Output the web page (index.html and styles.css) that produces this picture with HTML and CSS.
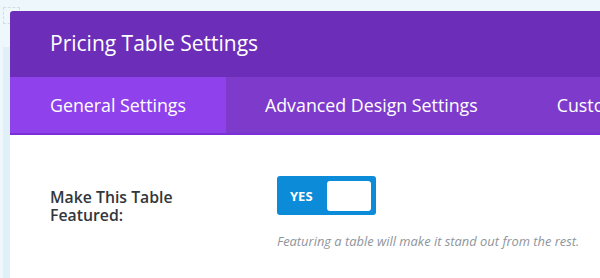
FILE: index.html
```html
<!DOCTYPE html>
<html lang="en">
<head>
    <meta charset="UTF-8">
    <title>Pricing Table Settings</title>
    <link rel="stylesheet" href="styles.css">
</head>
<body>
    <div class="backdrop">
        <div class="ghost-box"></div>
        <div class="ghost-strip"></div>
    </div>

    <div class="modal">
        <div class="modal-header">
            <h1>Pricing Table Settings</h1>
        </div>

        <!-- Tabs -->
        <div class="tabs">
            <div class="tab active">General Settings</div>
            <div class="tab">Advanced Design Settings</div>
            <div class="tab">Custom CSS</div>
        </div>

        <div class="modal-body">
            <div class="field-row">
                <div class="field-label">
                    <label>Make This Table Featured:</label>
                </div>
                <div class="field-control">
                    <div class="toggle">
                        <span class="toggle-text">YES</span>
                        <span class="toggle-knob"></span>
                    </div>
                    <p class="description">Featuring a table will make it stand out from the rest.</p>
                </div>
            </div>
        </div>
    </div>
</body>
</html>
```

FILE: styles.css
```css
/* Fondo general */
html {
    overflow: hidden;
}

body {
    margin: 0;
    background-color: #eef7fb;
    font-family: 'Open Sans', 'Noto Sans', sans-serif;
    overflow: hidden;
    height: 278px;
    position: relative;
}

.ghost-box {
    position: absolute;
    left: 3px;
    top: 7px;
    width: 15px;
    height: 15px;
    border: 1px dashed #d3dde2;
}

.ghost-strip {
    position: absolute;
    left: 3px;
    top: 47px;
    width: 7px;
    height: 231px;
    background-color: #e0f0f8;
}

/* Ventana */
.modal {
    position: absolute;
    left: 10px;
    top: 11px;
    right: 0;
    bottom: 0;
    background-color: #fff;
    border-radius: 3px 0 0 0;
    overflow: hidden;
}

.modal-header {
    background-color: #6c2eb9;
    height: 66px;
    padding: 0 40px;
    display: flex;
    align-items: center;
}

h1 {
    margin: 0;
    color: #fff;
    font-size: 21px;
    font-weight: 400;
    padding-bottom: 2px;
}

/* Pestañas */
.tabs {
    display: flex;
    background-color: #7e3bcb;
    border-bottom: 2px solid #7b2fd8;
    height: 56px;
    overflow: hidden;
}

.tab {
    padding: 0 40px;
    color: #fff;
    font-size: 17.8px;
    display: flex;
    align-items: center;
    white-space: nowrap;
    flex-shrink: 0;
}

.tab.active {
    background-color: #8f42ec;
}

.tab + .tab {
    padding-left: 39px;
}

/* Contenido */
.modal-body {
    padding: 41px 40px;
}

.field-row {
    display: flex;
}

.field-label {
    width: 227px;
    flex-shrink: 0;
    padding-top: 12px;
}

.field-label label {
    display: block;
    max-width: 140px;
    font-size: 15.8px;
    font-weight: 600;
    line-height: 18px;
    color: #32373c;
}

.toggle {
    width: 99px;
    height: 39px;
    box-sizing: border-box;
    background-color: #0c8bd9;
    border-radius: 3px;
    display: flex;
    align-items: center;
    justify-content: space-between;
    padding: 0 5px 0 13px;
}

.toggle-text {
    color: #fff;
    font-size: 13px;
    font-weight: 700;
}

.toggle-knob {
    width: 44px;
    height: 30px;
    background-color: #fff;
    border-radius: 3px;
}

.description {
    margin: 17px 0 0;
    font-size: 12.9px;
    font-style: italic;
    color: #8e959c;
    white-space: nowrap;
}
```
